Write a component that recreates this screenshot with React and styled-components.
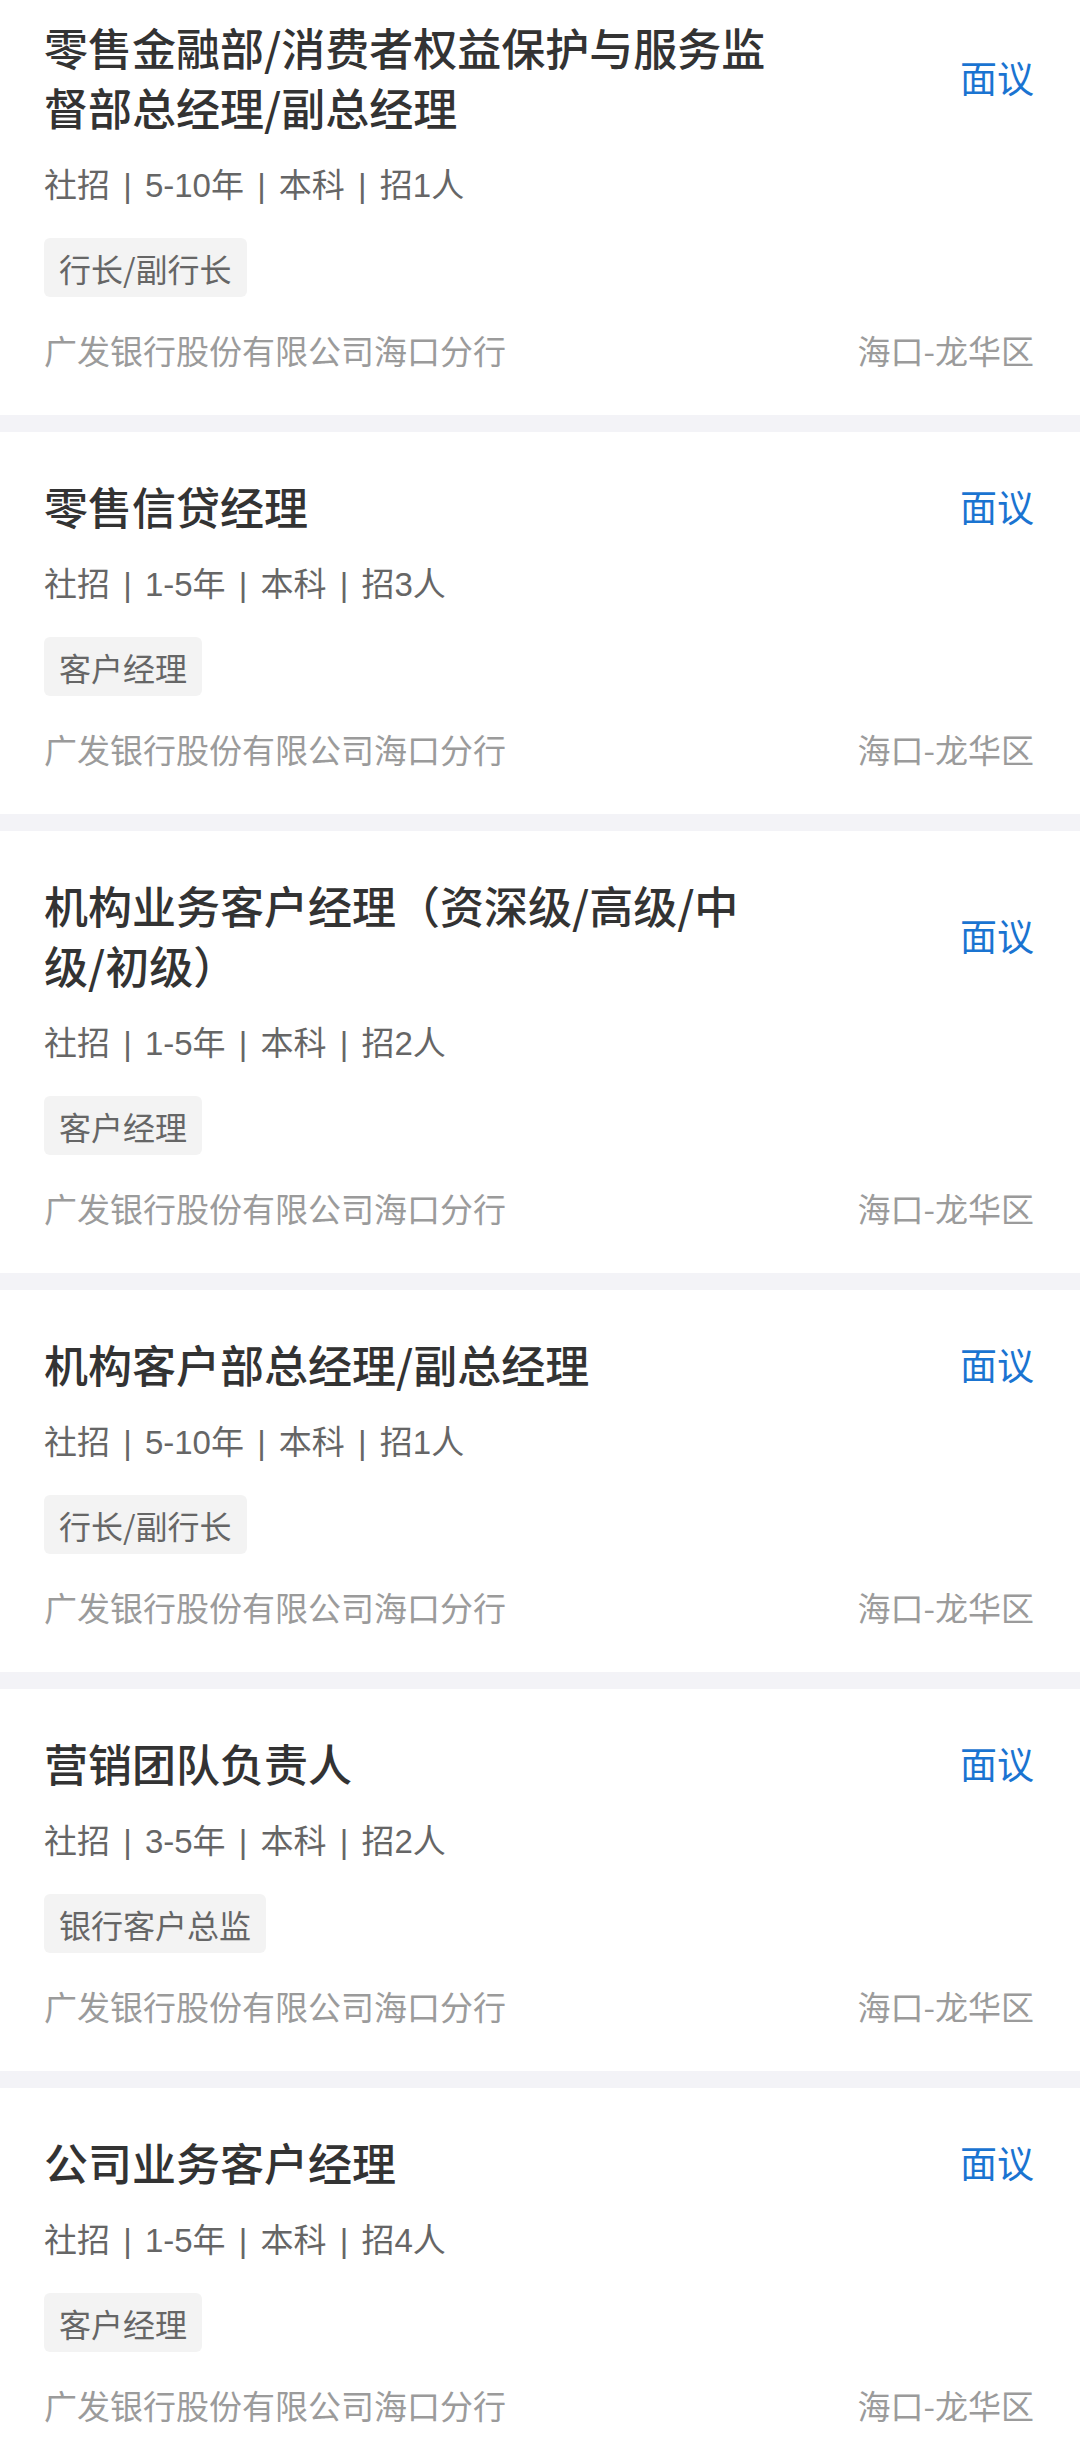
import React from "react";
import styled, { createGlobalStyle } from "styled-components";

const GlobalStyle = createGlobalStyle`
  * {
    box-sizing: border-box;
  }
  body {
    margin: 0;
    background: #f3f3f7;
    font-family: "Noto Sans CJK SC", "Noto Sans", sans-serif;
  }
`;

const List = styled.div`
  margin-top: -27px;
  display: flex;
  flex-direction: column;
  gap: 17px;
`;

const Card = styled.div`
  background: #ffffff;
  padding: 44px 46px 45px 44px;
`;

const TitleRow = styled.div`
  display: flex;
  align-items: center;
  justify-content: space-between;
`;

const Title = styled.h2`
  margin: 0;
  max-width: 728px;
  font-size: 44px;
  line-height: 60px;
  font-weight: 500;
  color: #333333;
`;

const Salary = styled.span`
  font-size: 37px;
  line-height: 60px;
  color: #1a74d1;
  flex-shrink: 0;
`;

const Meta = styled.div`
  margin-top: 29px;
  font-family: "Liberation Sans", "Noto Sans CJK SC", sans-serif;
  font-size: 33px;
  line-height: 40px;
  word-spacing: 4px;
  color: #666666;
`;

const Tag = styled.span`
  display: inline-flex;
  align-items: center;
  height: 59px;
  margin-top: 32px;
  padding: 0 15px;
  border-radius: 6px;
  background: #f3f3f3;
  font-size: 32px;
  color: #666666;
`;

const Footer = styled.div`
  margin-top: 33px;
  display: flex;
  justify-content: space-between;
  font-size: 33px;
  line-height: 40px;
  color: #9b9b9b;
`;

const jobs = [
  {
    title: "零售金融部/消费者权益保护与服务监督部总经理/副总经理",
    meta: "社招 | 5-10年 | 本科 | 招1人",
    tag: "行长/副行长",
  },
  {
    title: "零售信贷经理",
    meta: "社招 | 1-5年 | 本科 | 招3人",
    tag: "客户经理",
  },
  {
    title: "机构业务客户经理（资深级/高级/中级/初级）",
    meta: "社招 | 1-5年 | 本科 | 招2人",
    tag: "客户经理",
  },
  {
    title: "机构客户部总经理/副总经理",
    meta: "社招 | 5-10年 | 本科 | 招1人",
    tag: "行长/副行长",
  },
  {
    title: "营销团队负责人",
    meta: "社招 | 3-5年 | 本科 | 招2人",
    tag: "银行客户总监",
  },
  {
    title: "公司业务客户经理",
    meta: "社招 | 1-5年 | 本科 | 招4人",
    tag: "客户经理",
  },
];

function App() {
  return (
    <>
      <GlobalStyle />
      <List>
        {jobs.map((job, i) => (
          <Card key={i}>
            <TitleRow>
              <Title>{job.title}</Title>
              <Salary>面议</Salary>
            </TitleRow>
            <Meta>{job.meta}</Meta>
            <Tag>{job.tag}</Tag>
            <Footer>
              <span>广发银行股份有限公司海口分行</span>
              <span>海口-龙华区</span>
            </Footer>
          </Card>
        ))}
      </List>
    </>
  );
}

export default App;
